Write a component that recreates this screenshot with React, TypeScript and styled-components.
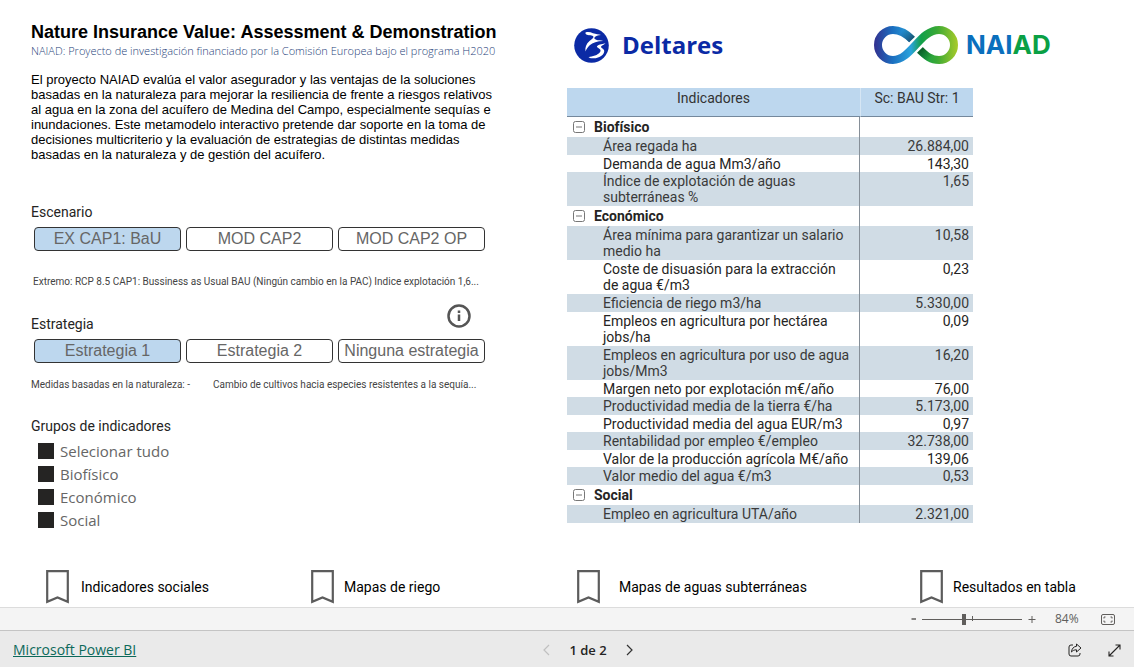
import React from "react";
import styled, { createGlobalStyle } from "styled-components";

const din = `Roboto, "Liberation Sans", sans-serif`;
const arial = `"Liberation Sans", Arial, sans-serif`;
const segoe = `"Open Sans", "Noto Sans", sans-serif`;

const GlobalStyle = createGlobalStyle`
  *, *::before, *::after { box-sizing: border-box; }
  body { margin: 0; background: #fff; color: #252423; font-family: ${din}; }
  button, input { font: inherit; margin: 0; }
  h1, h2, p { margin: 0; }
`;

const Page = styled.div`
  min-height: 100vh;
  display: flex;
  flex-direction: column;
`;

const Report = styled.main`
  flex: 1;
  display: flex;
  flex-direction: column;
  justify-content: space-between;
`;

const Columns = styled.div`
  display: grid;
  grid-template-columns: minmax(0, 1fr) minmax(0, 1fr);
  padding-top: 22px;
`;

const Left = styled.section`
  padding-left: 31px;
`;

const Right = styled.section`
  min-width: 0;
`;

const Title = styled.h1`
  font: 700 18px/20px ${arial};
  color: #000;
  white-space: nowrap;
`;

const Subtitle = styled.p`
  font: 300 11px/16px ${segoe};
  color: #1f3f7a;
  white-space: nowrap;
  margin-top: 1px;
`;

const Intro = styled.p`
  font: 400 13px/15px ${arial};
  color: #000;
  white-space: nowrap;
  margin-top: 13px;
`;

const SectionHead = styled.div<{ $top: number }>`
  display: flex;
  justify-content: space-between;
  align-items: flex-end;
  width: 440px;
  height: 28px;
  margin-top: ${(p) => p.$top}px;
`;

const SectionLabel = styled.h2`
  font: 400 14px/16px ${din};
  color: #252423;
`;

const IconButton = styled.button`
  display: inline-flex;
  align-items: center;
  justify-content: center;
  padding: 0;
  border: 0;
  background: none;
  color: inherit;
  cursor: pointer;
`;

const InfoButton = styled(IconButton)`
  align-self: flex-start;
`;

const Choices = styled.div`
  display: grid;
  grid-template-columns: repeat(3, 147px);
  gap: 5px;
  padding-left: 3px;
  margin-top: 7px;
`;

const Choice = styled.button<{ $on?: boolean }>`
  height: 24px;
  padding: 0;
  border: 1px solid #333;
  border-radius: 4px;
  background: ${(p) => (p.$on ? "#bdd7ee" : "#fff")};
  color: #666;
  font: 400 16px/22px ${arial};
  white-space: nowrap;
  cursor: pointer;
`;

const Notes = styled.div<{ $top: number; $split?: boolean }>`
  display: grid;
  grid-template-columns: ${(p) => (p.$split ? "170px 266px" : "446px")};
  column-gap: 12px;
  padding-left: ${(p) => (p.$split ? 0 : 2)}px;
  margin-top: ${(p) => p.$top}px;
`;

const Note = styled.p`
  font: 400 10px/14px ${din};
  color: #444;
  overflow: hidden;
  text-overflow: ellipsis;
  white-space: nowrap;
`;

const CheckList = styled.div`
  display: grid;
  grid-auto-rows: 23px;
  padding-left: 7px;
  margin-top: 5px;
`;

const CheckLabel = styled.label`
  display: flex;
  align-items: center;
  gap: 6px;
  font: 400 15px/20px ${segoe};
  color: #666;
`;

const CheckBox = styled.input`
  appearance: none;
  width: 16px;
  height: 16px;
  border: 1px solid #252423;
  &:checked { background: #252423; }
`;

const Logos = styled.div`
  display: grid;
  grid-template-columns: 300px auto;
  justify-content: start;
  align-items: center;
  height: 46px;
  padding-left: 7px;
  margin-bottom: 20px;
`;

const Logo = styled.div<{ $gap: number }>`
  display: flex;
  align-items: center;
  gap: ${(p) => p.$gap}px;
`;

const DeltaresName = styled.span`
  font: 700 24px/30px ${segoe};
  color: #0b2aa5;
`;

const NaiadName = styled.span`
  font: 700 26px/30px Inter, sans-serif;
  color: #0a6fbd;
  span { color: #0aa045; }
`;

const Table = styled.table`
  width: 406px;
  max-width: 100%;
  border-collapse: separate;
  border-spacing: 0;
  table-layout: fixed;
  font: 400 14px/16px ${din};
`;

const HeadCell = styled.th<{ $w?: number }>`
  width: ${(p) => (p.$w ? `${p.$w}px` : "auto")};
  height: 29px;
  padding: 2px 0 0;
  vertical-align: top;
  background: #bdd7ee;
  border-bottom: 1px solid #74889c;
  font-weight: 400;
  color: #333;
  & + & { border-left: 1px solid #d6e6f4; }
`;

const GroupCell = styled.th`
  height: 20px;
  padding: 0 0 0 6px;
  text-align: left;
  font-weight: 700;
  color: #252423;
  border-right: 1px solid #868f98;
`;

const GroupName = styled.div`
  display: flex;
  align-items: center;
  gap: 9px;
`;

const Row = styled.tr<{ $shade: boolean; $tall?: boolean }>`
  height: ${(p) => (p.$tall ? 34 : p.$shade ? 18 : 17)}px;
  background: ${(p) => (p.$shade ? "#d0dce5" : "#fff")};
  color: ${(p) => (p.$shade ? "#3a3a3a" : "#252423")};
`;

const NameCell = styled.th`
  padding: 1px 0 0 36px;
  text-align: left;
  vertical-align: top;
  font-weight: 400;
  white-space: nowrap;
  border-right: 1px solid #868f98;
`;

const ValueCell = styled.td`
  padding: 1px 4px 0 0;
  text-align: right;
  vertical-align: top;
`;

const Links = styled.nav`
  display: grid;
  grid-template-columns: 265fr 266fr 343fr 214fr;
  padding: 0 0 3px 46px;
`;

const NavItem = styled.a<{ $gap: number }>`
  display: flex;
  align-items: center;
  gap: ${(p) => p.$gap}px;
  font: 400 14px/16px ${din};
  color: #000;
  text-decoration: none;
  white-space: nowrap;
`;

const ZoomBar = styled.div`
  display: flex;
  align-items: center;
  justify-content: flex-end;
  height: 24px;
  padding-right: 19px;
  border-top: 1px solid #dcdcdc;
  border-bottom: 1px solid #c4c4c4;
  background: #f4f4f4;
  color: #605e5c;
  font: 400 12px/16px ${segoe};
`;

const ZoomStep = styled(IconButton)`
  width: 8px;
  height: 16px;
`;

const ZoomTrack = styled.div`
  position: relative;
  display: flex;
  margin: 0 6px 0 4px;
  &::after {
    content: "";
    position: absolute;
    left: 50%;
    top: 5px;
    width: 1px;
    height: 5px;
    background: #605e5c;
  }
`;

const ZoomRange = styled.input`
  appearance: none;
  width: 100px;
  height: 16px;
  background: linear-gradient(#605e5c, #605e5c) center / 100% 1px no-repeat;
  &::-webkit-slider-thumb {
    appearance: none;
    width: 4px;
    height: 11px;
    background: #605e5c;
  }
`;

const ZoomValue = styled.span`
  width: 26px;
  margin: 0 20px 0 19px;
`;

const Footer = styled.footer`
  display: grid;
  grid-template-columns: 1fr auto 1fr;
  align-items: center;
  height: 36px;
  padding: 2px 13px 0;
  background: #eaeaea;
  color: #252423;
`;

const BrandLink = styled.a`
  justify-self: start;
  font: 400 14px/18px ${segoe};
  color: #0c695a;
`;

const Pager = styled.div`
  display: flex;
  align-items: center;
  gap: 19px;
  padding-left: 42px;
  font: 600 13px/18px ${segoe};
`;

const Actions = styled.div`
  justify-self: end;
  display: flex;
  align-items: center;
  gap: 26px;
`;

type Item = { lines: string[]; value: string; shade: boolean };
const item = (shade: boolean, value: string, ...lines: string[]): Item => ({ lines, value, shade });

const groups: { name: string; items: Item[] }[] = [
  {
    name: "Biofísico",
    items: [
      item(true, "26.884,00", "Área regada ha"),
      item(false, "143,30", "Demanda de agua Mm3/año"),
      item(true, "1,65", "Índice de explotación de aguas", "subterráneas %"),
    ],
  },
  {
    name: "Económico",
    items: [
      item(true, "10,58", "Área mínima para garantizar un salario", "medio ha"),
      item(false, "0,23", "Coste de disuasión para la extracción", "de agua €/m3"),
      item(true, "5.330,00", "Eficiencia de riego m3/ha"),
      item(false, "0,09", "Empleos en agricultura por hectárea", "jobs/ha"),
      item(true, "16,20", "Empleos en agricultura por uso de agua", "jobs/Mm3"),
      item(false, "76,00", "Margen neto por explotación m€/año"),
      item(true, "5.173,00", "Productividad media de la tierra €/ha"),
      item(false, "0,97", "Productividad media del agua EUR/m3"),
      item(true, "32.738,00", "Rentabilidad por empleo €/empleo"),
      item(false, "139,06", "Valor de la producción agrícola M€/año"),
      item(true, "0,53", "Valor medio del agua €/m3"),
    ],
  },
  { name: "Social", items: [item(true, "2.321,00", "Empleo en agricultura UTA/año")] },
];

const intro = [
  "El proyecto NAIAD evalúa el valor asegurador y las ventajas de la soluciones",
  "basadas en la naturaleza para mejorar la resiliencia de frente a riesgos relativos",
  "al agua en la zona del acuífero de Medina del Campo, especialmente sequías e",
  "inundaciones. Este metamodelo interactivo pretende dar soporte en la toma de",
  "decisiones multicriterio y la evaluación de estrategias de distintas medidas",
  "basadas en la naturaleza y de gestión del acuífero.",
];

const Lines = ({ lines }: { lines: string[] }) => (
  <>
    {lines.map((l, i) => (
      <React.Fragment key={l}>
        {i > 0 && <br />}
        {l}
      </React.Fragment>
    ))}
  </>
);

const links = [
  { text: "Indicadores sociales", gap: 12 },
  { text: "Mapas de riego", gap: 10 },
  { text: "Mapas de aguas subterráneas", gap: 19 },
  { text: "Resultados en tabla", gap: 10 },
];

const DeltaresMark = () => (
  <svg width="35" height="35" viewBox="0 0 35 35" aria-hidden="true">
    <circle cx="17.500" cy="17.500" r="17.300" fill="#0b2aa5" />
    <path
      fill="#fff"
      d="M11.500 4.500C14 3.500 16.500 4.200 19 5.300c3 1.200 5.500.6 8 1.700-3 .2-5.500 1.200-6.500 2.500-.7 1.200.5 1.700 1.700 2.200 2 .8 4.500.4 7 1.300-6 .2-10.500 1.500-13.500 4.200-2 1.800-3.300 4-4.200 6.300-.6-4 .6-7.500 4-10.500 1.500-1.500 3.800-2.500 4-4 .1-1.800-3.500-1.500-5.500-2-1.500-.4-3-1-2.500-2.500z"
    />
    <path
      fill="#fff"
      d="M31.500 15.200c-4.500 1-7.500 1.500-8.500 3-.7 1.500 3 1.800 3.500 4 .3 2.500-3 4.300-5.500 5.300-2.500 1-4.500 1-6.500 1.700 2.500 1.500 6.500 1.500 9.500.3 4-1.500 6.500-4 6.200-6.800-.2-2.200-3.500-2.700-3.200-4 .3-1.200 2.500-1.500 4.500-3.500z"
    />
  </svg>
);

const NaiadMark = () => (
  <svg width="84" height="38" viewBox="0 0 84 38" fill="none" aria-hidden="true">
    <defs>
      <linearGradient id="loop" gradientUnits="userSpaceOnUse" x1="0" y1="19" x2="84" y2="19">
        <stop offset="0" stopColor="#33308f" />
        <stop offset=".22" stopColor="#1b6fc0" />
        <stop offset=".44" stopColor="#2aa3dc" />
        <stop offset=".56" stopColor="#12a04a" />
        <stop offset=".75" stopColor="#3aa935" />
        <stop offset="1" stopColor="#a9cb2a" />
      </linearGradient>
      <linearGradient id="shadeA" gradientUnits="userSpaceOnUse" x1="28" y1="5" x2="40" y2="15">
        <stop offset="0" stopColor="#123a5c" stopOpacity="0" />
        <stop offset="1" stopColor="#123a5c" stopOpacity=".9" />
      </linearGradient>
      <linearGradient id="shadeB" gradientUnits="userSpaceOnUse" x1="56" y1="33" x2="45" y2="23">
        <stop offset="0" stopColor="#0a4d1e" stopOpacity="0" />
        <stop offset="1" stopColor="#0a4d1e" stopOpacity=".9" />
      </linearGradient>
    </defs>
    <g strokeWidth="8">
      <path
        stroke="url(#loop)"
        d="M38 13.500C32 7.500 26 4 19 4a15 15 0 0 0 0 30C37 34 46 4 65 4a15 15 0 0 1 0 30C57 34 52 30 46 24"
      />
      <path stroke="url(#shadeA)" d="M38 13.500C34 9.500 30 6.500 26 5" />
      <path stroke="url(#shadeB)" d="M46 24c4 4 8 7.500 12 9" />
    </g>
  </svg>
);

export default function App() {
  return (
    <Page>
      <GlobalStyle />
      <Report>
        <Columns>
          <Left>
            <Title>Nature Insurance Value: Assessment &amp; Demonstration</Title>
            <Subtitle>
              NAIAD: Proyecto de investigación financiado por la Comisión Europea bajo el programa H2020
            </Subtitle>
            <Intro>
              <Lines lines={intro} />
            </Intro>

            <SectionHead $top={30}>
              <SectionLabel>Escenario</SectionLabel>
            </SectionHead>
            <Choices role="group" aria-label="Escenario">
              <Choice $on aria-pressed="true">EX CAP1: BaU</Choice>
              <Choice aria-pressed="false">MOD CAP2</Choice>
              <Choice aria-pressed="false">MOD CAP2 OP</Choice>
            </Choices>
            <Notes $top={24}>
              <Note>Extremo: RCP 8.5 CAP1: Bussiness as Usual BAU (Ningún cambio en la PAC) Indice explotación 1,6...</Note>
            </Notes>

            <SectionHead $top={15}>
              <SectionLabel>Estrategia</SectionLabel>
              <InfoButton aria-label="Información">
                <svg width="24" height="24" viewBox="0 0 24 24" fill="none" stroke="#555" strokeWidth="2.500">
                  <circle cx="12" cy="12" r="10.500" />
                  <path d="M12 10.500V17M12 6.500V9" />
                </svg>
              </InfoButton>
            </SectionHead>
            <Choices role="group" aria-label="Estrategia">
              <Choice $on aria-pressed="true">Estrategia 1</Choice>
              <Choice aria-pressed="false">Estrategia 2</Choice>
              <Choice aria-pressed="false">Ninguna estrategia</Choice>
            </Choices>
            <Notes $top={15} $split>
              <Note>Medidas basadas en la naturaleza: -</Note>
              <Note>Cambio de cultivos hacia especies resistentes a la sequía...</Note>
            </Notes>

            <SectionHead $top={14}>
              <SectionLabel>Grupos de indicadores</SectionLabel>
            </SectionHead>
            <CheckList>
              {["Selecionar tudo", "Biofísico", "Económico", "Social"].map((t) => (
                <CheckLabel key={t}>
                  <CheckBox type="checkbox" defaultChecked />
                  {t}
                </CheckLabel>
              ))}
            </CheckList>
          </Left>

          <Right>
            <Logos>
              <Logo $gap={13}>
                <DeltaresMark />
                <DeltaresName>Deltares</DeltaresName>
              </Logo>
              <Logo $gap={8}>
                <NaiadMark />
                <NaiadName>
                  NAI<span>AD</span>
                </NaiadName>
              </Logo>
            </Logos>
            <Table>
              <thead>
                <tr>
                  <HeadCell scope="col">Indicadores</HeadCell>
                  <HeadCell scope="col" $w={113}>Sc: BAU Str: 1</HeadCell>
                </tr>
              </thead>
              {groups.map((g) => (
                <tbody key={g.name}>
                  <tr>
                    <GroupCell scope="rowgroup">
                      <GroupName>
                        <IconButton aria-label={`Contraer ${g.name}`}>
                          <svg width="12" height="12" viewBox="0 0 12 12" fill="none" stroke="#777">
                            <rect x=".5" y=".5" width="11" height="11" rx="2" />
                            <path d="M3 6h6" />
                          </svg>
                        </IconButton>
                        {g.name}
                      </GroupName>
                    </GroupCell>
                    <td />
                  </tr>
                  {g.items.map((it) => (
                    <Row key={it.lines[0]} $shade={it.shade} $tall={it.lines.length > 1}>
                      <NameCell scope="row">
                        <Lines lines={it.lines} />
                      </NameCell>
                      <ValueCell>{it.value}</ValueCell>
                    </Row>
                  ))}
                </tbody>
              ))}
            </Table>
          </Right>
        </Columns>

        <Links>
          {links.map((l) => (
            <NavItem key={l.text} href="#" $gap={l.gap}>
              <svg width="23" height="34" viewBox="0 0 23 34" fill="none" stroke="#5c5c5c" strokeWidth="2.200">
                <path d="M1.200 1.200h20.600v30.600L11.500 27.500 1.200 31.800z" />
              </svg>
              {l.text}
            </NavItem>
          ))}
        </Links>
      </Report>

      <ZoomBar>
        <ZoomStep aria-label="Alejar">
          <svg width="8" height="8" viewBox="0 0 8 8" stroke="#605e5c" strokeWidth="1.500">
            <path d="M1.500 4h4.500" />
          </svg>
        </ZoomStep>
        <ZoomTrack>
          <ZoomRange type="range" min={0} max={200} defaultValue={84} aria-label="Zoom" />
        </ZoomTrack>
        <ZoomStep aria-label="Acercar">
          <svg width="8" height="8" viewBox="0 0 8 8" stroke="#605e5c">
            <path d="M.5 4.500h7M4 1v7" />
          </svg>
        </ZoomStep>
        <ZoomValue>84%</ZoomValue>
        <IconButton aria-label="Ajustar a la página">
          <svg width="14" height="11" viewBox="0 0 14 11" fill="none" stroke="#605e5c">
            <rect x=".5" y=".5" width="13" height="10" rx="1.500" />
            <path d="M3 4.500v-1.500h1.500M9.500 3h1.500v1.500M11 6.500v1.500H9.500M4.500 8H3V6.500" />
          </svg>
        </IconButton>
      </ZoomBar>

      <Footer>
        <BrandLink href="#">Microsoft Power BI</BrandLink>
        <Pager>
          <IconButton aria-label="Página anterior" disabled>
            <svg width="7" height="12" viewBox="0 0 7 12" fill="none" stroke="#c0c0c0" strokeWidth="1.200">
              <path d="M6 1L1 6l5 5" />
            </svg>
          </IconButton>
          <span>1 de 2</span>
          <IconButton aria-label="Página siguiente">
            <svg width="7" height="12" viewBox="0 0 7 12" fill="none" stroke="#333" strokeWidth="1.200">
              <path d="M1 1l5 5-5 5" />
            </svg>
          </IconButton>
        </Pager>
        <Actions>
          <IconButton aria-label="Compartir">
            <svg width="14" height="14" viewBox="0 0 14 14" fill="none" stroke="#252423" strokeLinejoin="round">
              <path d="M5 2H3a2 2 0 0 0-2 2v7a2 2 0 0 0 2 2h7a2 2 0 0 0 2-2v-1" />
              <path d="M8.500 1l4.500 4-4.500 4V6.800C6.200 6.800 4.800 7.500 3.500 9c.2-3.200 2-5.400 5-5.700z" />
            </svg>
          </IconButton>
          <IconButton aria-label="Pantalla completa">
            <svg width="13" height="13" viewBox="0 0 13 13" fill="none" stroke="#252423" strokeWidth="1.100">
              <path d="M7.500 1H12v4.500M12 1L1 12M1 7.500V12h4.500" />
            </svg>
          </IconButton>
        </Actions>
      </Footer>
    </Page>
  );
}
